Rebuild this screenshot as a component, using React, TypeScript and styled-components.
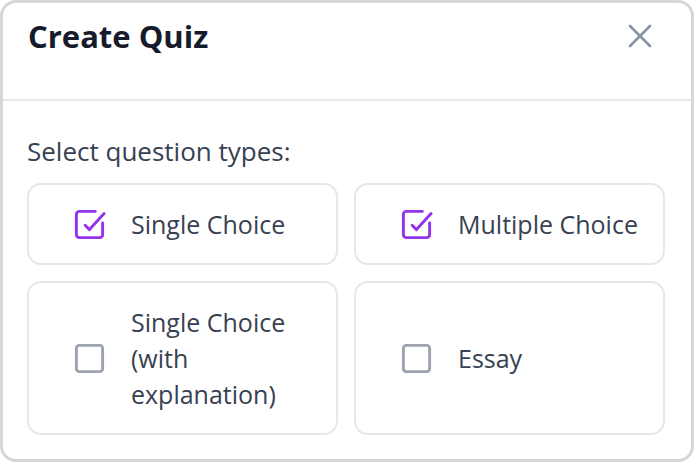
import React from 'react';
import styled, { createGlobalStyle } from 'styled-components';

const GlobalStyle = createGlobalStyle`
  * { box-sizing: border-box; }
  html, body { margin: 0; padding: 0; background: #ffffff; }
  body { font-family: "Open Sans", "Noto Sans", sans-serif; }
`;

const Modal = styled.div`
  width: 694px;
  height: 462px;
  border: 3px solid #d6d6d8;
  border-radius: 16px;
  background: #ffffff;
  display: flex;
  flex-direction: column;
  overflow: hidden;
`;

const Header = styled.div`
  height: 98px;
  padding: 12px 39px 0 25px;
  display: flex;
  justify-content: space-between;
  align-items: flex-start;
  border-bottom: 2px solid #e7e7ec;
`;

const Title = styled.h2`
  margin: 0;
  font-size: 31px;
  line-height: 42px;
  font-weight: 700;
  color: #161b2c;
`;

const CloseButton = styled.button`
  border: 0;
  background: none;
  padding: 0;
  margin-top: 9px;
  width: 24px;
  height: 24px;
  color: #8a93a3;
  cursor: pointer;
  display: flex;
`;

const Body = styled.div`
  padding: 32px 26px 0 24px;
`;

const Label = styled.div`
  font-size: 26px;
  line-height: 36px;
  color: #374151;
  margin-bottom: 14px;
`;

const Grid = styled.div`
  display: grid;
  grid-template-columns: 1fr 1fr;
  gap: 16px;
`;

const Option = styled.label`
  display: flex;
  align-items: center;
  gap: 24px;
  padding: 21px 14px 21px 43px;
  border: 2px solid #e6e7ec;
  border-radius: 14px;
  cursor: pointer;
`;

const OptionText = styled.span`
  font-size: 25px;
  line-height: 36px;
  color: #374151;
`;

const Box = styled.svg<{ $checked: boolean }>`
  flex: none;
  width: 35px;
  height: 35px;
  color: ${(p) => (p.$checked ? '#9333ea' : '#9ca3af')};
`;

const CheckIcon: React.FC<{ checked: boolean }> = ({ checked }) => (
  <Box
    $checked={checked}
    viewBox="0 0 24 24"
    fill="none"
    stroke="currentColor"
    strokeWidth={2}
    strokeLinecap="round"
    strokeLinejoin="round"
  >
    {checked ? (
      <>
        <path d="M21 11v8a2 2 0 0 1-2 2H5a2 2 0 0 1-2-2V5a2 2 0 0 1 2-2h11" />
        <path d="M9 12.5l3 3L22 4.5" />
      </>
    ) : (
      <rect x="3" y="3" width="18" height="18" rx="2" />
    )}
  </Box>
);

const options = [
  { label: 'Single Choice', checked: true },
  { label: 'Multiple Choice', checked: true },
  { label: 'Single Choice (with explanation)', checked: false },
  { label: 'Essay', checked: false },
];

const App: React.FC = () => {
  return (
    <>
      <GlobalStyle />
      <Modal>
        <Header>
          <Title>Create Quiz</Title>
          <CloseButton aria-label="Close">
            <svg width="24" height="24" viewBox="0 0 24 24" fill="none" stroke="currentColor" strokeWidth={2.6} strokeLinecap="round">
              <path d="M2 2L22 22M22 2L2 22" />
            </svg>
          </CloseButton>
        </Header>
        <Body>
          <Label>Select question types:</Label>
          <Grid>
            {options.map((o) => (
              <Option key={o.label}>
                <CheckIcon checked={o.checked} />
                <OptionText>{o.label}</OptionText>
              </Option>
            ))}
          </Grid>
        </Body>
      </Modal>
    </>
  );
};

export default App;
